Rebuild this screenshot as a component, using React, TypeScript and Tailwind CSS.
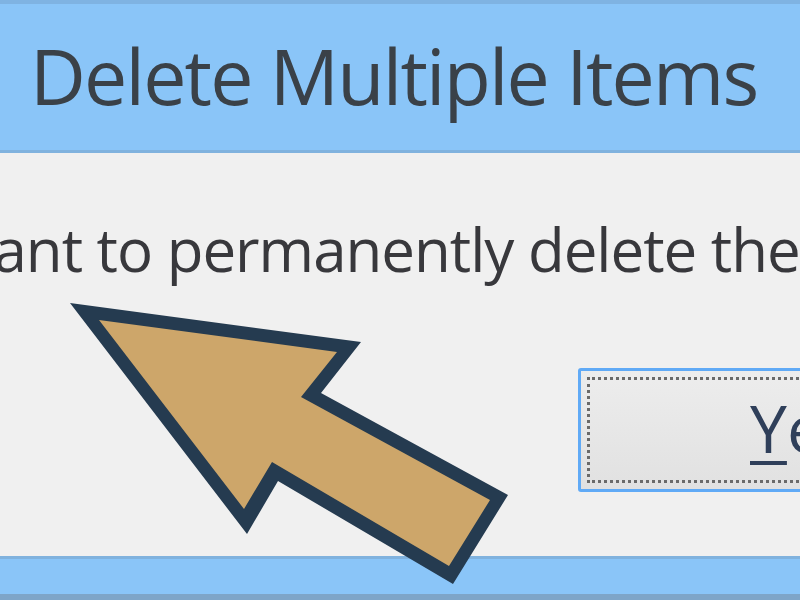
import React from "react";

export default function App() {
  return (
    <div
      className="relative w-[800px] h-[600px] overflow-hidden bg-[#f0f0f0] flex flex-col"
      style={{ fontFamily: '"Open Sans", "Noto Sans", sans-serif' }}
    >
      <div className="h-[153px] shrink-0 border-t-[4px] border-t-[#7fb3e2] border-b-[3px] border-b-[#80b2de] bg-[#8ac5f8] flex items-center pl-[30px]">
        <span className="text-[77px] leading-none text-[#3a4148] tracking-[-1.8px] mt-[-4px]">
          Delete Multiple Items
        </span>
      </div>
      <div className="flex-1 flex flex-col overflow-hidden">
        <div className="mt-[66px] ml-[-52px] whitespace-nowrap text-[60px] leading-none text-[#38383c] tracking-[-1px]">
          want to permanently delete these items?
        </div>
        <div className="mt-[89px] ml-[578px] w-[320px] h-[124px] shrink-0 rounded-[3px] border-[3px] border-[#60aaf6] bg-gradient-to-b from-[#ededed] to-[#e1e1e1] p-[6px]">
          <div className="h-full w-full border-[3px] border-dotted border-[#6a6a6a] flex items-center pl-[160px]">
            <span className="text-[66px] leading-none text-[#2f3f5a] mt-[-6px]">
              <span className="underline decoration-[4px] underline-offset-[8px]">Y</span>es
            </span>
          </div>
        </div>
      </div>
      <div className="h-[44px] shrink-0 border-t-[3px] border-t-[#80b2de] border-b-[6px] border-b-[#7ea5c8] bg-[#8ac5f8]" />
      <svg
        className="absolute inset-0 pointer-events-none"
        width="800"
        height="600"
        viewBox="0 0 800 600"
      >
        <polygon
          points="70,303 361,342 321,393 508,495 453,584 278,481 247,534"
          fill="#253b50"
        />
        <polygon
          points="99,320 337,352 301,397 490,500 449,566 272,462 244,509"
          fill="#cda66a"
        />
      </svg>
    </div>
  );
}
